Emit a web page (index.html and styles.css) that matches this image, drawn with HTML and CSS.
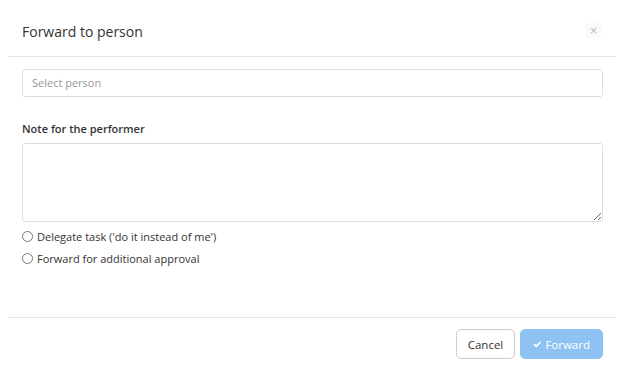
FILE: index.html
```html
<!DOCTYPE html>
<html lang="en">
<head>
    <meta charset="UTF-8">
    <meta name="viewport" content="width=device-width, initial-scale=1.0">
    <title>Forward to person</title>
    <link rel="stylesheet" href="styles.css">
</head>
<body>
    <div class="modal">
        <div class="modal-header">
            <h4 class="modal-title">Forward to person</h4>
            <button class="close" type="button">&times;</button>
        </div>
        <div class="modal-body">
            <input type="text" class="form-control" placeholder="Select person">
            <label class="note-label" for="note">Note for the performer</label>
            <textarea id="note" class="form-control note"></textarea>
            <label class="radio"><input type="radio" name="mode"> Delegate task ('do it instead of me')</label>
            <label class="radio"><input type="radio" name="mode"> Forward for additional approval</label>
        </div>
        <div class="modal-footer">
            <button class="btn btn-default" type="button">Cancel</button>
            <button class="btn btn-primary" type="button" disabled>
                <svg width="11" height="9" viewBox="0 0 12 10"><path d="M0.5 5.4 L2.2 3.7 L4.5 6 L9.8 0.7 L11.5 2.4 L4.5 9.4 Z" fill="#fff"/></svg>
                Forward
            </button>
        </div>
    </div>
</body>
</html>
```

FILE: styles.css
```css
body { margin: 0; font-family: "Open Sans", sans-serif; font-size: 11px; color: #333; background: #fff; }
.modal { padding: 0 8px; }
.modal-header { display: flex; align-items: center; justify-content: space-between; height: 56px; padding: 0 14px; border-bottom: 1px solid #e5e5e5; }
.modal-title { margin: 6px 0 0; font-size: 14px; font-weight: normal; color: #333; }
.close { width: 15px; height: 15px; padding: 0; margin: 4px 1px 0 0; border: none; background: #fafafa; color: #bbb; font-size: 13px; line-height: 13px; cursor: pointer; }
.modal-body { padding: 12px 13px 0 14px; height: 248px; }
.form-control { display: block; box-sizing: border-box; width: 100%; border: 1px solid #ddd; border-radius: 3px; font-family: inherit; font-size: 11px; color: #333; }
input.form-control { height: 28px; padding: 3px 9px 5px; }
input.form-control::placeholder { color: #999; }
.note-label { display: block; margin: 24px 0 7px; font-weight: 600; font-size: 11px; }
.note { height: 79px; resize: vertical; }
.radio { display: flex; align-items: center; gap: 2px; margin-top: 7px; font-size: 11px; height: 15px; }
.radio:first-of-type { margin-top: 11px; }
.radio input { margin: 0 2px 0 0; width: 11px; height: 11px; }
.modal-footer { display: flex; justify-content: flex-end; gap: 5px; padding: 11px 13px; border-top: 1px solid #e5e5e5; }
.btn { height: 30px; padding: 0 10px; border-radius: 5px; font-family: inherit; font-size: 11.5px; cursor: pointer; }
.btn-default { background: #fff; border: 1px solid #ccc; color: #333; width: 59px; }
.btn-primary { display: flex; align-items: center; gap: 4px; background: #8ec2f3; border: 1px solid #8ec2f3; color: #fff; width: 83px; padding: 0 12px; }
```
